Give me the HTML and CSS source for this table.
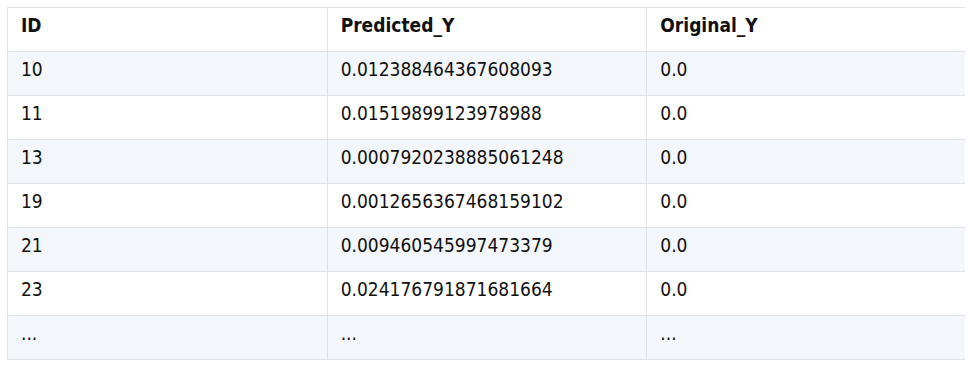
FILE: index.html
```html
<!DOCTYPE html>
<html>
<head>
<meta charset="utf-8">
<link rel="stylesheet" href="styles.css">
</head>
<body>
<table class="data">
  <thead>
    <tr><th>ID</th><th>Predicted_Y</th><th>Original_Y</th></tr>
  </thead>
  <tbody>
    <tr><td>10</td><td>0.012388464367608093</td><td>0.0</td></tr>
    <tr><td>11</td><td>0.01519899123978988</td><td>0.0</td></tr>
    <tr><td>13</td><td>0.0007920238885061248</td><td>0.0</td></tr>
    <tr><td>19</td><td>0.0012656367468159102</td><td>0.0</td></tr>
    <tr><td>21</td><td>0.009460545997473379</td><td>0.0</td></tr>
    <tr><td>23</td><td>0.024176791871681664</td><td>0.0</td></tr>
    <tr><td>...</td><td>...</td><td>...</td></tr>
  </tbody>
</table>
</body>
</html>
```
FILE: styles.css
```css
html, body {
  background: #ffffff;
}
body {
  margin: 7px;
  font-family: "DejaVu Sans Condensed", "DejaVu Sans", sans-serif;
  font-size: 19px;
  color: #111111;
}
.data {
  border-collapse: collapse;
  table-layout: fixed;
  width: 960px;
}
.data th,
.data td {
  border: 1px solid #dfe2e6;
  height: 44px;
  padding: 0 12px 9px 13px;
  text-align: left;
  vertical-align: middle;
  box-sizing: border-box;
}
.data th {
  font-weight: bold;
  background: #ffffff;
}
.data tbody tr:nth-child(odd) td {
  background: #f3f6fa;
}
```
